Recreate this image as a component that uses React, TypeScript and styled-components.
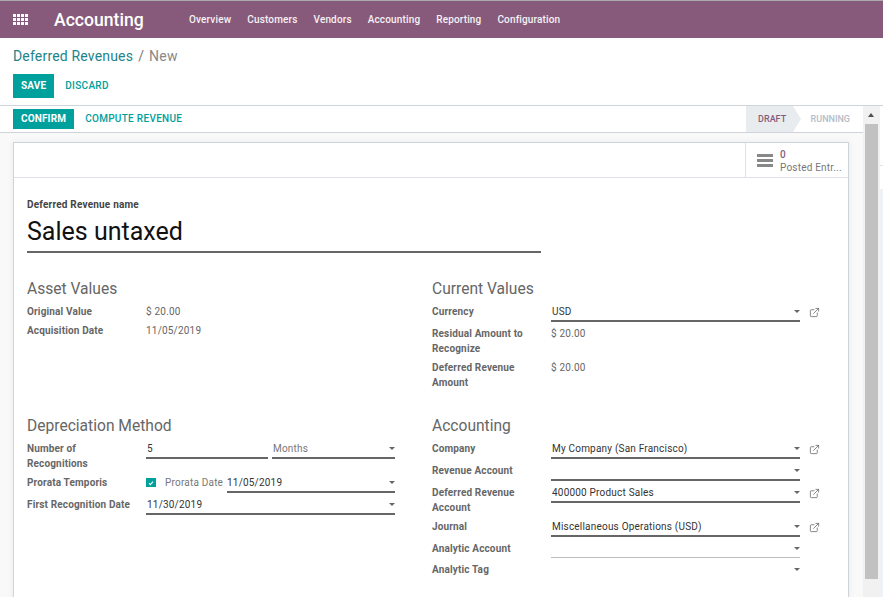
import React from "react";
import styled, { createGlobalStyle } from "styled-components";
import { ExternalLink } from "lucide-react";

const GlobalStyle = createGlobalStyle`
  html, body { margin: 0; padding: 0; height: 100%; overflow: hidden; background: #fff; }
  body { font-family: Roboto, "Noto Sans", sans-serif; font-size: 10px; color: #666; }
`;

const menus = ["Overview", "Customers", "Vendors", "Accounting", "Reporting", "Configuration"];

function Select({
  value,
  width,
  line,
  muted,
  flush,
}: {
  value?: string;
  width?: number;
  line?: "none" | "thin";
  muted?: boolean;
  flush?: boolean;
}) {
  return (
    <FieldBox $width={width} $line={line} $muted={muted} $flush={flush}>
      <span>{value}</span>
      <Caret />
    </FieldBox>
  );
}

function Ext() {
  return (
    <ExtLink>
      <ExternalLink size={11} strokeWidth={1.7} />
    </ExtLink>
  );
}

export default function App() {
  return (
    <Page>
      <GlobalStyle />
      <TopBar>
        <Apps>
          {Array.from({ length: 12 }).map((_, i) => (
            <i key={i} />
          ))}
        </Apps>
        <Brand>Accounting</Brand>
        <Menu>
          {menus.map((m) => (
            <MenuItem key={m}>{m}</MenuItem>
          ))}
        </Menu>
      </TopBar>

      <ControlPanel>
        <Crumbs>
          <CrumbLink>Deferred Revenues</CrumbLink>
          <CrumbSep>/</CrumbSep>
          <CrumbNow>New</CrumbNow>
        </Crumbs>
        <Buttons>
          <PrimaryButton $height={24}>SAVE</PrimaryButton>
          <LinkButton>DISCARD</LinkButton>
        </Buttons>
      </ControlPanel>

      <Body>
        <Main>
          <StatusBar>
            <Buttons>
              <PrimaryButton $height={20}>CONFIRM</PrimaryButton>
              <LinkButton>COMPUTE REVENUE</LinkButton>
            </Buttons>
            <Steps>
              <StepActive>DRAFT</StepActive>
              <Step>RUNNING</Step>
            </Steps>
          </StatusBar>

          <Sheet>
            <ButtonBox>
              <StatButton>
                <BarsIcon>
                  <i />
                  <i />
                  <i />
                </BarsIcon>
                <StatText>
                  <StatValue>0</StatValue>
                  <StatLabel>Posted Entr...</StatLabel>
                </StatText>
              </StatButton>
            </ButtonBox>

            <SheetBody>
              <NameLabel>Deferred Revenue name</NameLabel>
              <NameInput>Sales untaxed</NameInput>

              <Columns>
                <Column>
                  <GroupTitle>Asset Values</GroupTitle>
                  <Row>
                    <Label>Original Value</Label>
                    <Value>$ 20.00</Value>
                  </Row>
                  <Row>
                    <Label>Acquisition Date</Label>
                    <Value>11/05/2019</Value>
                  </Row>
                </Column>

                <Column>
                  <GroupTitle>Current Values</GroupTitle>
                  <Row>
                    <Label>Currency</Label>
                    <Select value="USD" width={249} />
                    <Ext />
                  </Row>
                  <Row>
                    <Label>Residual Amount to Recognize</Label>
                    <Value>$ 20.00</Value>
                  </Row>
                  <Row>
                    <Label>Deferred Revenue Amount</Label>
                    <Value>$ 20.00</Value>
                  </Row>
                </Column>

                <Column>
                  <GroupTitle>Depreciation Method</GroupTitle>
                  <Row>
                    <Label>Number of Recognitions</Label>
                    <InlineFields>
                      <PlainField>5</PlainField>
                      <Select value="Months" width={123} muted />
                    </InlineFields>
                  </Row>
                  <Row>
                    <Label>Prorata Temporis</Label>
                    <InlineFields>
                      <CheckBox>
                        <svg width="6" height="6" viewBox="0 0 6 6">
                          <path d="M1 3.2 L2.4 4.6 L5 1.6" fill="none" stroke="#fff" strokeWidth="1.1" />
                        </svg>
                      </CheckBox>
                      <InlineLabel>Prorata Date</InlineLabel>
                      <Select value="11/05/2019" width={168} flush />
                    </InlineFields>
                  </Row>
                  <Row>
                    <Label>First Recognition Date</Label>
                    <Select value="11/30/2019" width={249} />
                  </Row>
                </Column>

                <Column>
                  <GroupTitle>Accounting</GroupTitle>
                  <Row>
                    <Label>Company</Label>
                    <Select value="My Company (San Francisco)" width={249} />
                    <Ext />
                  </Row>
                  <Row>
                    <Label>Revenue Account</Label>
                    <Select width={249} />
                  </Row>
                  <Row>
                    <Label>Deferred Revenue Account</Label>
                    <Select value="400000 Product Sales" width={249} />
                    <Ext />
                  </Row>
                  <Row>
                    <Label>Journal</Label>
                    <Select value="Miscellaneous Operations (USD)" width={249} />
                    <Ext />
                  </Row>
                  <Row>
                    <Label>Analytic Account</Label>
                    <Select width={249} line="thin" />
                  </Row>
                  <Row>
                    <Label>Analytic Tag</Label>
                    <Select width={249} line="none" />
                  </Row>
                </Column>
              </Columns>
            </SheetBody>
          </Sheet>
        </Main>

        <Scrollbar>
          <ScrollArrow />
          <ScrollThumb />
        </Scrollbar>
        <Aside />
      </Body>
    </Page>
  );
}

const Page = styled.div`
  width: 883px;
  height: 597px;
  display: flex;
  flex-direction: column;
  overflow: hidden;
`;

const TopBar = styled.header`
  height: 37px;
  flex: none;
  display: flex;
  align-items: center;
  background: #875a7b;
  border-top: 1px solid #a9a9a9;
  box-sizing: content-box;
`;

const Apps = styled.div`
  display: grid;
  grid-template-columns: repeat(4, 3px);
  grid-auto-rows: 3px;
  gap: 1px;
  margin-left: 13px;
  width: 15px;
  i { background: #fff; display: block; }
`;

const Brand = styled.div`
  margin-left: 26px;
  width: 135px;
  font-size: 17.6px;
  font-weight: 500;
  color: #fff;
`;

const Menu = styled.nav`
  display: flex;
  gap: 16px;
`;

const MenuItem = styled.span`
  font-size: 10px;
  font-weight: 500;
  letter-spacing: 0.15px;
  color: #fff;
  opacity: 0.92;
`;

const ControlPanel = styled.div`
  flex: none;
  height: 68px;
  box-sizing: border-box;
  padding: 9px 13px 0;
  border-bottom: 1px solid #ced4da;
`;

const Crumbs = styled.div`
  display: flex;
  gap: 5px;
  font-size: 14px;
  letter-spacing: 0.18px;
  line-height: 19px;
  margin-bottom: 8px;
`;

const CrumbLink = styled.span`
  color: #21848a;
`;

const CrumbSep = styled.span`
  color: #777;
`;

const CrumbNow = styled.span`
  color: #888;
`;

const Buttons = styled.div`
  display: flex;
  align-items: center;
`;

const PrimaryButton = styled.button<{ $height: number }>`
  height: ${(p) => p.$height}px;
  padding: 0 8px 2px;
  border: 0;
  background: #00a09d;
  color: #fff;
  font: 700 10px Roboto, sans-serif;
  letter-spacing: 0.15px;
`;

const LinkButton = styled.button`
  border: 0;
  background: none;
  padding: 0 11px 2px;
  color: #00a09d;
  font: 500 10px Roboto, sans-serif;
  letter-spacing: 0.3px;
`;

const Body = styled.div`
  flex: 1;
  min-height: 0;
  display: flex;
`;

const Main = styled.main`
  width: 863px;
  flex: none;
  background: #f9f9f9;
`;

const StatusBar = styled.div`
  height: 27px;
  box-sizing: border-box;
  padding-left: 13px;
  display: flex;
  justify-content: space-between;
  align-items: center;
  background: #fff;
  border-bottom: 1px solid #ced4da;
`;

const Steps = styled.div`
  display: flex;
  align-self: stretch;
  font-size: 9px;
  font-weight: 500;
`;

const StepActive = styled.div`
  position: relative;
  width: 47px;
  box-sizing: border-box;
  padding-left: 12.5px;
  display: flex;
  align-items: center;
  background: #e9ecef;
  color: #875a7b;
  &::after {
    content: "";
    position: absolute;
    right: -8px;
    top: 0;
    border-left: 8px solid #e9ecef;
    border-top: 13px solid transparent;
    border-bottom: 13px solid transparent;
  }
`;

const Step = styled.div`
  padding: 0 13px 0 18px;
  display: flex;
  align-items: center;
  color: #b4bcc8;
`;

const Sheet = styled.section`
  width: 836px;
  height: 600px;
  margin: 9px 0 0 13px;
  box-sizing: border-box;
  background: #fff;
  border: 1px solid #ced4da;
  box-shadow: 0 0 6px rgba(0, 0, 0, 0.07);
`;

const ButtonBox = styled.div`
  height: 34px;
  display: flex;
  justify-content: flex-end;
  border-bottom: 1px solid #dee2e6;
`;

const StatButton = styled.div`
  width: 103px;
  box-sizing: border-box;
  padding: 1px 0 0 11px;
  display: flex;
  align-items: center;
  gap: 7px;
  border-left: 1px solid #dee2e6;
`;

const BarsIcon = styled.div`
  width: 16px;
  display: flex;
  flex-direction: column;
  gap: 2px;
  i { display: block; height: 3px; background: #888; }
`;

const StatText = styled.div`
  display: flex;
  flex-direction: column;
  font-size: 10px;
  line-height: 13px;
`;

const StatValue = styled.span`
  color: #875a7b;
  font-weight: 500;
`;

const StatLabel = styled.span`
  color: #777;
  letter-spacing: 0.2px;
`;

const SheetBody = styled.div`
  padding: 21px 13px 0;
`;

const NameLabel = styled.div`
  font-size: 10px;
  font-weight: 700;
  letter-spacing: 0.2px;
  color: #444;
  line-height: 12px;
  margin-bottom: 6px;
`;

const NameInput = styled.div`
  width: 514px;
  height: 36px;
  box-sizing: border-box;
  border-bottom: 2px solid #666;
  font-size: 25px;
  line-height: 30px;
  color: #111;
`;

const Columns = styled.div`
  display: grid;
  grid-template-columns: 405px 1fr;
  grid-template-rows: 137px auto;
  margin-top: 26px;
`;

const Column = styled.div`
  min-width: 0;
`;

const GroupTitle = styled.h3`
  margin: 0 0 5px;
  font-size: 15.6px;
  font-weight: 400;
  line-height: 20px;
  color: #666;
`;

const Row = styled.div`
  display: flex;
  align-items: flex-start;
  padding-bottom: 4px;
`;

const Label = styled.div`
  width: 119px;
  flex: none;
  padding-right: 14px;
  box-sizing: border-box;
  font-size: 10px;
  font-weight: 700;
  letter-spacing: 0.15px;
  line-height: 15px;
  color: #666;
`;

const Value = styled.div`
  font-size: 10px;
  line-height: 15px;
  letter-spacing: 0.2px;
  color: #666;
`;

const FieldBox = styled.div<{ $width?: number; $line?: "none" | "thin"; $muted?: boolean; $flush?: boolean }>`
  width: ${(p) => p.$width ?? 249}px;
  height: ${(p) => (p.$line === "thin" ? 17 : 18)}px;
  flex: none;
  box-sizing: border-box;
  padding-left: ${(p) => (p.$flush ? 0 : 1)}px;
  display: flex;
  align-items: flex-start;
  justify-content: space-between;
  font-size: 10px;
  line-height: 15px;
  letter-spacing: 0.2px;
  color: ${(p) => (p.$muted ? "#777" : "#333")};
  border-bottom: ${(p) =>
    p.$line === "none" ? "0" : p.$line === "thin" ? "1px solid #bbb" : "2px solid #666"};
`;

const Caret = styled.i`
  margin-top: 6px;
  border-left: 3px solid transparent;
  border-right: 3px solid transparent;
  border-top: 3px solid #666;
`;

const ExtLink = styled.span`
  margin: 1px 0 0 9px;
  color: #666;
  line-height: 15px;
  display: flex;
  align-items: center;
  height: 14px;
`;

const InlineFields = styled.div`
  width: 249px;
  display: flex;
  align-items: flex-start;
`;

const PlainField = styled.div`
  width: 122px;
  height: 18px;
  margin-right: 4px;
  flex: none;
  box-sizing: border-box;
  padding-left: 1px;
  font-size: 10px;
  line-height: 15px;
  color: #333;
  border-bottom: 2px solid #666;
`;

const CheckBox = styled.span`
  width: 10px;
  height: 9px;
  margin: 3px 9px 0 0;
  flex: none;
  display: flex;
  align-items: center;
  justify-content: center;
  background: #00a09d;
`;

const InlineLabel = styled.span`
  width: 62px;
  flex: none;
  font-size: 10px;
  line-height: 15px;
  letter-spacing: 0.2px;
  color: #777;
`;

const Scrollbar = styled.div`
  width: 17px;
  flex: none;
  box-sizing: border-box;
  padding: 0 2px;
  background: #f1f1f1;
  display: flex;
  flex-direction: column;
`;

const ScrollArrow = styled.i`
  height: 18px;
  display: block;
  position: relative;
  &::after {
    content: "";
    position: absolute;
    left: 3px;
    top: 7px;
    border-left: 3.5px solid transparent;
    border-right: 3.5px solid transparent;
    border-bottom: 4px solid #505050;
  }
`;

const ScrollThumb = styled.div`
  height: 455px;
  background: #c1c1c1;
`;

const Aside = styled.div`
  flex: 1;
  margin-top: 59px;
  border-top: 1px solid #e4e4e4;
  background: linear-gradient(#fff 23px, #eef1f6 23px);
`;
